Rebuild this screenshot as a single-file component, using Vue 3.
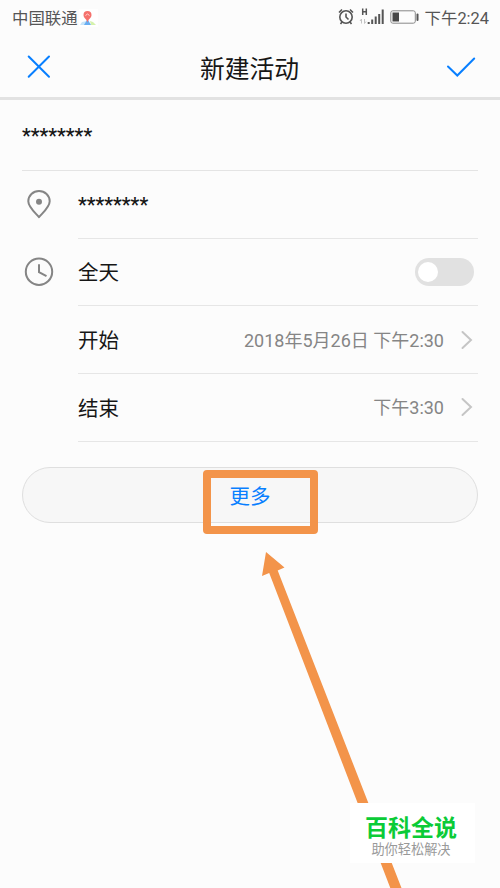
<script setup>
import { ref } from 'vue'

const allDay = ref(false)
const times = [
  { label: '开始', value: '2018年5月26日 下午2:30' },
  { label: '结束', value: '下午3:30' },
]
</script>

<template>
  <main class="screen">
    <div class="status">
      <span class="carrier">中国联通</span>
      <svg class="map" width="19" height="18" viewBox="0 0 19 18">
        <rect width="19" height="18" fill="#fff" />
        <path d="M3 13L8 12L6 16H1Z" fill="#c8e5fa" />
        <path d="M11 12L14 13L17 16H12Z" fill="#d5f2ad" />
        <path d="M8.500 10L12 16H5Z" fill="#69aef2" />
        <path d="M8.500 13.500C7.500 9.500 4.500 9 4.500 6a4 4 0 0 1 8 0C12.500 9 9.500 9.500 8.500 13.500Z" fill="#f5716c" />
        <path d="M6.500 6.500l2-1.500 2 1.500" fill="none" stroke="#ffd5d2" />
      </svg>
      <svg class="indicators" width="84" height="22" viewBox="0 0 84 22" fill="none">
        <g stroke="#555" stroke-width="1.600">
          <circle cx="11" cy="12" r="6.200" />
          <path d="M11 8.500V12l2.500 2.500M4 7.500l3-3M15 4.500l3 3M7 17l-1.500 2M15 17l1.500 2" />
        </g>
        <path d="M27.700 3.500v6.500M31.300 3.500v6.500M27.700 6.800h3.600" stroke="#555" stroke-width="1.500" />
        <path d="M26.500 18.500v-4.500l-1.500 2M29.500 14v4.500l1.500-2" stroke="#c4c4c4" />
        <path d="M33.700 19v-2M37.200 19v-4.500M40.700 19v-7.500M44.200 19V9M47.700 19V4.500" stroke="#555" stroke-width="2" />
        <rect x="55.800" y="5.800" width="24.500" height="12.400" rx="2" stroke="#888" />
        <rect x="57.500" y="7.500" width="6.500" height="9" fill="#484848" />
        <rect x="81.500" y="8.500" width="2" height="7.500" rx="1" fill="#555" />
      </svg>
      <time>下午2:24</time>
    </div>

    <header class="header">
      <svg width="30" height="30" viewBox="0 0 30 30" fill="none" stroke="#087fff" stroke-width="2" stroke-linecap="round">
        <path d="M4.700 5.500L25 25.800M25 5.500L4.700 25.800" />
      </svg>
      <h1>新建活动</h1>
      <svg width="34" height="30" viewBox="0 0 34 30" fill="none" stroke="#087fff" stroke-width="2" stroke-linecap="round">
        <path d="M4 15.500L13.300 24.500L30.200 7.500" />
      </svg>
    </header>

    <section class="form">
      <div class="title-row"><span class="stars">********</span></div>
      <div class="field">
        <svg class="icon" width="34" height="34" viewBox="0 0 34 34" fill="none" stroke="#858585" stroke-width="2">
          <path d="M17 29.200C13.500 25 6.300 19 6.300 13.200a10.700 10.200 0 0 1 21.400 0C27.700 19 20.500 25 17 29.200Z" stroke-linejoin="round" />
          <circle cx="17" cy="13.700" r="3" fill="#858585" stroke="none" />
        </svg>
        <div class="content"><span class="stars">********</span></div>
      </div>
      <div class="field">
        <svg class="icon" width="34" height="34" viewBox="0 0 34 34" fill="none" stroke="#858585" stroke-width="2">
          <circle cx="17" cy="16.700" r="13.200" />
          <path d="M17 9.200V17.200L24.500 21.200" />
        </svg>
        <div class="content">
          <span class="label">全天</span>
          <button class="switch" :class="{ on: allDay }" role="switch" :aria-checked="allDay" @click="allDay = !allDay"><i></i></button>
        </div>
      </div>
      <div v-for="item in times" :key="item.label" class="field">
        <div class="content">
          <span class="label">{{ item.label }}</span>
          <span class="value">{{ item.value }}</span>
          <svg class="chevron" width="12" height="20" viewBox="0 0 12 20" fill="none" stroke="#c5c5c5" stroke-width="2" stroke-linecap="round">
            <path d="M1.500 2L10 10L1.500 18" />
          </svg>
        </div>
      </div>
      <button class="more">更多</button>
    </section>

    <div class="highlight"></div>
    <svg class="arrow" width="152" height="340" viewBox="0 0 152 340" fill="#f3944a">
      <path d="M16 4L34.500 19.500L27.700 22.500L151.500 340H140.300L19.200 25L12 28Z" />
    </svg>
    <aside class="brand">
      <strong>百科全说</strong>
      <span>助你轻松解决</span>
    </aside>
  </main>
</template>

<style>
body { margin: 0; background: #fcfcfc; }
</style>

<style scoped>
.screen {
  position: relative;
  box-sizing: border-box;
  width: 500px;
  height: 888px;
  overflow: hidden;
  background: #fcfcfc;
  color: #161616;
  font-family: Roboto, "Noto Sans CJK SC", sans-serif;
}
.screen svg { display: block; flex: none; }
.status {
  display: flex;
  align-items: center;
  box-sizing: border-box;
  height: 35px;
  padding: 0 11px 2px 12px;
  font-size: 16.4px;
  color: #555;
  white-space: nowrap;
}
.map { margin: 2px 0 0 1px; }
.indicators { margin: 0 0 1px auto; }
.status time { margin-left: 5.500px; }
.header {
  display: flex;
  align-items: center;
  justify-content: space-between;
  box-sizing: border-box;
  height: 65px;
  padding: 0 22px 0 24px;
  border-bottom: 3px solid #e2e2e2;
}
.header h1 {
  margin: 8px 0 0 1px;
  font-size: 24.800px;
  font-weight: 400;
  line-height: 32px;
}
.form { padding: 0 22px; }
.title-row {
  display: flex;
  align-items: center;
  box-sizing: border-box;
  height: 71px;
  border-bottom: 1px solid #e4e4e4;
}
.field {
  display: flex;
  align-items: center;
  justify-content: flex-end;
  height: 67.650px;
}
.icon { margin-right: 22px; }
.content {
  display: flex;
  align-items: center;
  box-sizing: border-box;
  width: 400px;
  height: 100%;
  border-bottom: 1px solid #e6e6e6;
  font-size: 20.500px;
}
.label { padding-bottom: 1px; }
.stars {
  padding-top: 3px;
  font-size: 19.800px;
  font-weight: 500;
  line-height: 24px;
}
.switch {
  width: 59px;
  height: 28px;
  margin: 0 4px 0 auto;
  padding: 4px 3px;
  border: 0;
  border-radius: 14px;
  background: #e1e1e1;
}
.switch i {
  display: block;
  width: 20px;
  height: 20px;
  border-radius: 50%;
  background: #fff;
}
.switch.on { background: #087fff; }
.switch.on i { margin-left: 33px; }
.value {
  margin-left: auto;
  padding-bottom: 2px;
  color: #858585;
  font-size: 18px;
}
.chevron { margin: 0 5px 0 17px; }
.more {
  display: block;
  box-sizing: border-box;
  width: 100%;
  height: 56px;
  margin-top: 25.400px;
  padding: 1px 0 0;
  border: 1px solid #dfdfdf;
  border-radius: 28px;
  background: #f7f7f7;
  color: #087fff;
  font: inherit;
  font-size: 20.500px;
}
.highlight {
  position: absolute;
  left: 203px;
  top: 470px;
  box-sizing: border-box;
  width: 115px;
  height: 64px;
  border: 8px solid #f3944a;
  border-radius: 4px;
}
.arrow {
  position: absolute;
  left: 250px;
  top: 548px;
}
.brand {
  position: absolute;
  left: 350px;
  top: 803px;
  display: flex;
  flex-direction: column;
  align-items: center;
  box-sizing: border-box;
  width: 125px;
  height: 60px;
  padding: 12px 0 0;
  background: #fff;
}
.brand strong {
  margin-right: 3px;
  color: #0bcb37;
  font-size: 23px;
  font-weight: 700;
  line-height: 27px;
}
.brand span {
  margin-right: 3px;
  color: #999;
  font-size: 13.200px;
  line-height: 16px;
}
</style>
